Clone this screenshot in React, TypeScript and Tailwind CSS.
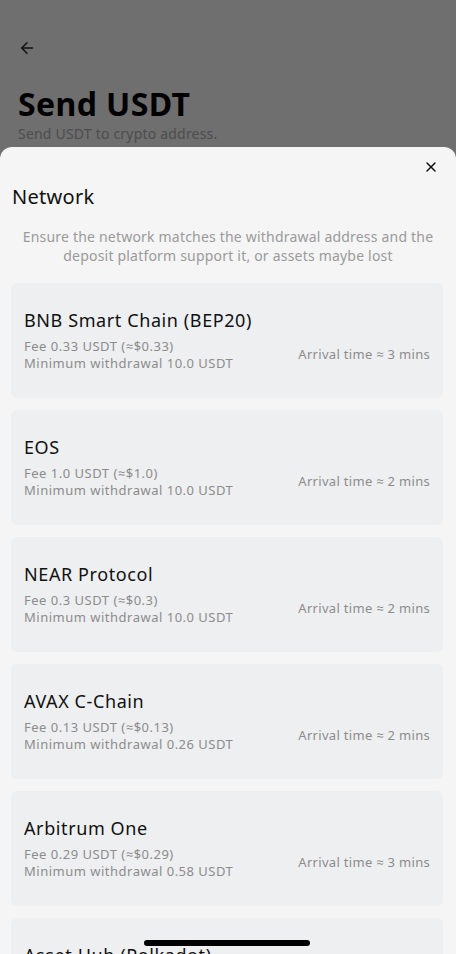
import { X, ArrowLeft } from "lucide-react";

type Net = {
  name: string;
  fee: string;
  min: string;
  time: string;
};

const networks: Net[] = [
  { name: "BNB Smart Chain (BEP20)", fee: "Fee 0.33 USDT (≈$0.33)", min: "Minimum withdrawal 10.0 USDT", time: "Arrival time ≈ 3 mins" },
  { name: "EOS", fee: "Fee 1.0 USDT (≈$1.0)", min: "Minimum withdrawal 10.0 USDT", time: "Arrival time ≈ 2 mins" },
  { name: "NEAR Protocol", fee: "Fee 0.3 USDT (≈$0.3)", min: "Minimum withdrawal 10.0 USDT", time: "Arrival time ≈ 2 mins" },
  { name: "AVAX C-Chain", fee: "Fee 0.13 USDT (≈$0.13)", min: "Minimum withdrawal 0.26 USDT", time: "Arrival time ≈ 2 mins" },
  { name: "Arbitrum One", fee: "Fee 0.29 USDT (≈$0.29)", min: "Minimum withdrawal 0.58 USDT", time: "Arrival time ≈ 3 mins" },
  { name: "Asset Hub (Polkadot)", fee: "Fee 0.2 USDT (≈$0.2)", min: "Minimum withdrawal 10.0 USDT", time: "Arrival time ≈ 2 mins" },
];

function NetworkCard({ n }: { n: Net }) {
  return (
    <div className="flex h-[115px] shrink-0 flex-col justify-center rounded-md bg-[#eeeff1] px-[13px] pb-[2px]">
      <p className="text-[18px] leading-[24px] tracking-[0.6px] text-[#111]">{n.name}</p>
      <div className="mt-[6px] flex items-center justify-between">
        <div className="text-[13px] leading-[17px] tracking-[0.5px] text-[#8c8c8c]">
          <p>{n.fee}</p>
          <p>{n.min}</p>
        </div>
        <p className="text-[13px] tracking-[0.3px] text-[#8c8c8c]">{n.time}</p>
      </div>
    </div>
  );
}

export default function App() {
  return (
    <div
      className="relative flex h-[954px] w-[456px] flex-col overflow-hidden bg-[#6f6f6f]"
      style={{ fontFamily: '"Noto Sans", "Open Sans", sans-serif' }}
    >
      <div className="px-[18px] pt-[39px]">
        <ArrowLeft className="h-[18px] w-[18px] text-[#111]" strokeWidth={2} />
        <h1 className="mt-[30px] text-[32px] font-bold leading-[34px] tracking-[0.4px] text-black">Send USDT</h1>
        <p className="mt-[4px] text-[14px] leading-[18px] tracking-[0.2px] text-[#4d4d4d]">Send USDT to crypto address.</p>
      </div>

      <div className="mt-[4px] flex flex-1 flex-col rounded-t-xl bg-[#f5f5f5]">
        <div className="flex justify-end pr-[17px] pt-[12px]">
          <X className="h-[16px] w-[16px] text-[#111]" strokeWidth={2.2} />
        </div>
        <h2 className="mt-[9px] px-[12px] text-[20px] leading-[26px] tracking-[0.3px] text-[#111]">Network</h2>
        <p className="mt-[17px] px-[14px] text-center text-[14px] leading-[19px] tracking-[0.2px] text-[#9a9a9a]">
          Ensure the network matches the withdrawal address and the deposit platform support it, or assets maybe lost
        </p>
        <div className="mt-[18px] flex flex-col gap-[12px] px-[11px] pr-[13px]">
          {networks.map((n) => (
            <NetworkCard key={n.name} n={n} />
          ))}
        </div>
      </div>

      <div className="absolute bottom-[8px] left-[144px] h-[6px] w-[166px] rounded-full bg-black" />
    </div>
  );
}
